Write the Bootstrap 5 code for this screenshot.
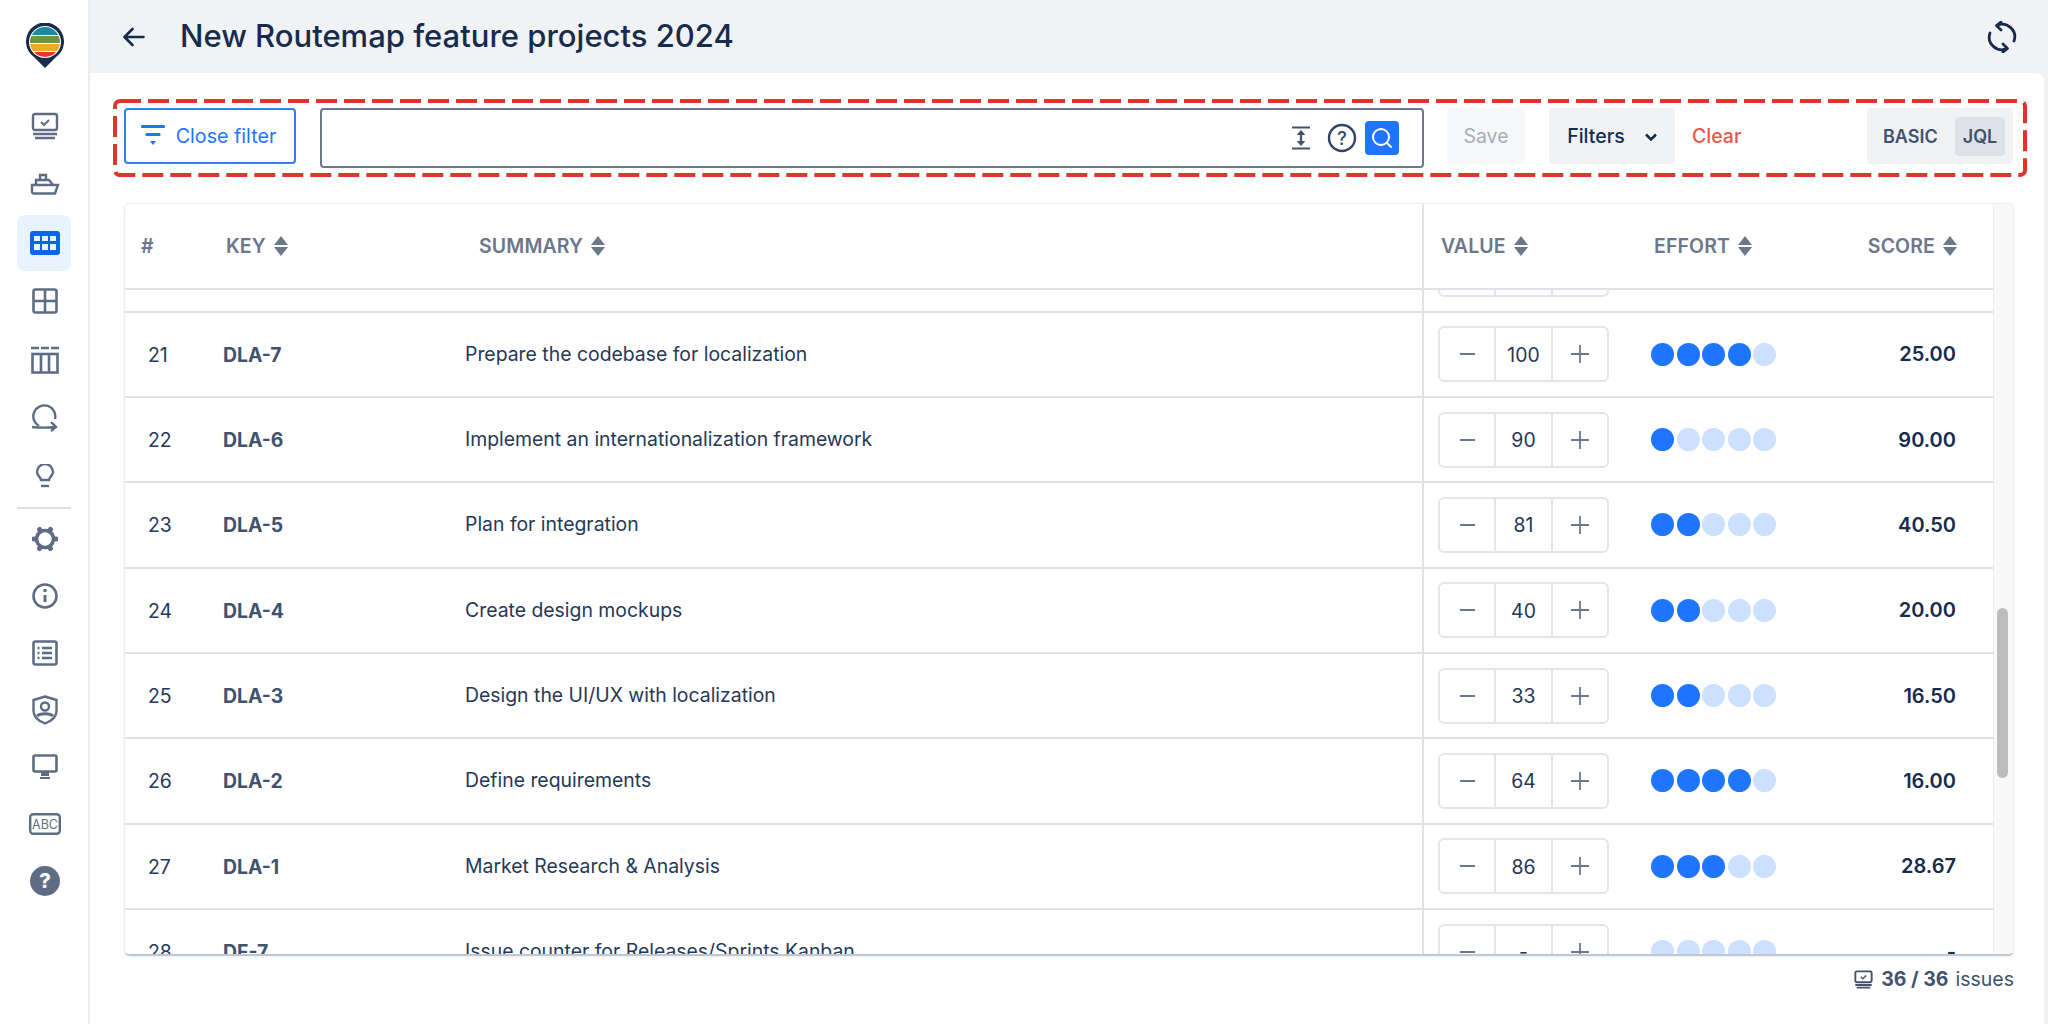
<!doctype html>
<html lang="en"><head><meta charset="utf-8"><title>Routemap</title>
<link href="https://cdn.jsdelivr.net/npm/bootstrap@5.3.0/dist/css/bootstrap.min.css" rel="stylesheet">
<style>
html,body{height:100%;overflow:hidden}
body{font-family:Inter,"Liberation Sans",sans-serif;color:#172b4d;background:#f1f2f4;font-size:19.500px}
.shell{height:1024px}
.rail{width:90px;background:#fff;border-right:2px solid #ebecf0;padding-top:23px}
.rail-logo{height:44px;margin-bottom:31px;padding-left:2px}
.rail-item{width:54px;height:56px;margin-bottom:2.4px;border-radius:8px;color:#5e6c84;padding-left:2px}
.rail-item.is-on{background:#e9f2ff;color:#0c66e4}
.rail-low .rail-item{height:57px;margin-bottom:0}
.rail-sep{width:54px;height:2px;background:#dfe1e6;margin:0 0 2px}
.topbar{height:73px;padding:0 30px 0 33px}
.topbar h1{font-size:31px;font-weight:500;margin:-2px 0 0 35px;color:#172b4d}
.sheet{background:#fff;margin-right:4px;border-top-right-radius:8px;height:951px;padding:26px 30px 0 34px}
.filterbar{position:relative;height:78px;margin:0 -13px 26px -11px;padding:9px 0 0 11px;align-items:flex-start}
.dashbox{position:absolute;left:0;top:0;pointer-events:none}
.btn-close-filter{height:56px;width:172px;border:2px solid #2f80ed;border-radius:4px;color:#1f75ff;background:#fff;font-size:19.700px;padding:2px 0 0;margin-right:24px;gap:11px}
.btn-close-filter svg{margin:-3px 0 0 -3px}
.jql{width:1104px;height:60px;border:2px solid #6b778c;border-radius:4px;padding-right:23px;margin-right:23px;background:#fff}
.go{width:34px;height:34px;border-radius:4px;background:#1f75ff}
.plain{height:56px;border-radius:4px;border:0;font-size:19.500px;padding:2px 0 0;background:#f1f2f4;font-weight:500}
.savebtn{width:78px;background:#f7f8f9;color:#a5adba;margin-right:24px;font-weight:400}
.filtersbtn{width:126px;margin-right:17px;color:#172b4d;gap:20px}
.clearlink{color:#e8574b;font-weight:500;line-height:56px;width:49px;white-space:nowrap}
.modes{width:146px;height:56px;background:#f1f2f4;border-radius:4px;margin-left:126px;padding:9px 8px 8px 16px;font-size:18px;font-weight:600;color:#42526e}
.modes b{font-weight:600;width:50px;height:39px;background:#dfe1e6;border-radius:4px;color:#42526e}
.grid-frame{height:753px;border:1px solid #ebecf0;border-bottom:2px solid #c1c7d0;border-radius:6px;box-shadow:0 1px 2px rgba(9,30,66,.08);overflow:hidden;width:1890px}
.scroller{height:100%;overflow:hidden;width:1868px;flex:none}
.track{flex:1 1 auto;background:#f9f9fa;border-left:1px solid #ebecf0;padding:404px 0 0 3px}
.thumb{width:11px;height:170px;border-radius:6px;background:#bdbdbd}
.issues{table-layout:fixed;width:1868px;border-collapse:separate;border-spacing:0;margin:0}
.issues th{position:sticky;top:0;z-index:2;background:#fff;height:86px;border-bottom:2px solid #dfe1e6;font-size:19.500px;letter-spacing:.12px;font-weight:600;color:#6b778c;padding:2px 0 0;vertical-align:middle;text-transform:uppercase;white-space:nowrap}
.issues td{height:85.33px;border-bottom:2px solid #dfe1e6;padding:0;vertical-align:middle;font-size:19.400px;color:#253858;background:#fff;white-space:nowrap}
.issues .divide{border-left:2px solid #dfe1e6}
.issues td.cnum{padding:2px 0 0 23px}
.issues th.cnum{padding-left:16px}
.issues td.ckey{padding:2px 0 0 10px;font-weight:700;color:#42526e}
.issues th.hkey{padding-left:13px}
.issues th.hsum{padding-left:14px}
.issues th.divide{padding-left:17px}
.issues td.cval{padding-left:14px}
.issues th.heff{padding-left:5px}
.issues th.hscore{text-align:right;padding-right:36px}
.issues td.cscore{text-align:right;padding-right:37px;font-weight:600;color:#172b4d;font-size:20px}
.spacer td{border:0;padding:0}
.sorter{display:inline-block;vertical-align:-3px;margin-left:8px}
.stepper{width:171px;height:56px;border:2px solid #e3e5e9;border-radius:6px;overflow:hidden;background:#fff}
.stepper span{display:flex;align-items:center;justify-content:center;height:100%}
.stepper .pm{width:54px;flex:none}
.stepper .mid{width:59px;padding-top:2px;border-left:2px solid #e3e5e9;border-right:2px solid #e3e5e9;flex:none;color:#253858}
.dots{gap:2.6px;padding-left:2px}
.dots i{display:block;width:23px;height:23px;border-radius:50%;background:#cce0ff}
.dots i.on{background:#1f75ff}
.tally{margin-top:9px;font-size:19.500px;color:#42526e;justify-content:flex-end;width:1890px}
.tally strong{font-weight:700;margin:0 7px 0 8px}
</style></head>
<body>
<div class="d-flex shell">
<nav class="rail d-flex flex-column align-items-center flex-shrink-0">
<div class="rail-logo">
<svg width="38" height="45" viewBox="0 0 38 45"><path d="M19 45 L8 34 A19 19 0 1 1 30 34 Z" fill="#172b4d"/><circle cx="19" cy="19" r="16" fill="#fff"/><clipPath id="lg"><circle cx="19" cy="19" r="15"/></clipPath><g clip-path="url(#lg)"><rect width="38" height="8" y="4" fill="#1b8a9c"/><rect width="38" height="7" y="13" fill="#76903f"/><rect width="38" height="7" y="21" fill="#f5a623"/><rect width="38" height="7" y="29" fill="#e8352e"/></g></svg>
</div>
<a class="rail-item d-flex align-items-center justify-content-center"><svg width="28" height="28" viewBox="0 0 28 28" fill="none" stroke="currentColor" stroke-width="2.4"><rect x="2" y="2" width="24" height="16" rx="2"/><path d="M10 10l3 3 5-5" stroke-width="2"/><path d="M2 22h24M4 26h20"/></svg></a>
<a class="rail-item d-flex align-items-center justify-content-center"><svg width="30" height="22" viewBox="0 0 30 22" fill="none" stroke="currentColor" stroke-width="2.4"><path d="M2 12h26l-3 8.500H4a2 2 0 0 1-2-2z"/><path d="M6 12V7h13l4 5M10 7V2h6v5"/></svg></a>
<a class="rail-item is-on d-flex align-items-center justify-content-center"><svg width="30" height="24" viewBox="0 0 30 24"><rect width="30" height="24" rx="3" fill="currentColor"/><g fill="#e9f2ff"><rect x="4" y="5" width="6" height="5"/><rect x="12" y="5" width="6" height="5"/><rect x="20" y="5" width="6" height="5"/><rect x="4" y="13" width="6" height="6"/><rect x="12" y="13" width="6" height="6"/><rect x="20" y="13" width="6" height="6"/></g></svg></a>
<a class="rail-item d-flex align-items-center justify-content-center"><svg width="26" height="26" viewBox="0 0 26 26" fill="none" stroke="currentColor" stroke-width="2.6"><rect x="1.500" y="1.500" width="23" height="23" rx="2"/><path d="M13 2v22M2 13h22"/></svg></a>
<a class="rail-item d-flex align-items-center justify-content-center"><svg width="28" height="28" viewBox="0 0 28 28" fill="none" stroke="currentColor" stroke-width="2.6"><path d="M0 2h8M10 2h8M20 2h8" /><rect x="1.500" y="8" width="25" height="18.500"/><path d="M10 8v18M18 8v18"/></svg></a>
<a class="rail-item d-flex align-items-center justify-content-center"><svg width="28" height="28" viewBox="0 0 28 28" fill="none" stroke="currentColor" stroke-width="2.4"><path d="M8 22A11 11 0 1 1 24 15"/><path d="M1 23c8 1 14 1 24 0M20 18l5 5-5 4"/></svg></a>
<a class="rail-item d-flex align-items-center justify-content-center"><svg width="20" height="24" viewBox="0 0 20 24" fill="none" stroke="currentColor" stroke-width="2.4"><path d="M6 16c0-3-4-4-4-8a8 8 0 0 1 16 0c0 4-4 5-4 8z"/><path d="M6 22h8"/></svg></a>
<div class="rail-sep"></div>
<div class="rail-low d-flex flex-column align-items-center">
<a class="rail-item d-flex align-items-center justify-content-center"><svg width="26" height="26" viewBox="0 0 26 26"><g transform="rotate(30 13 13)"><path d="M13 4.500a8.500 8.500 0 1 0 0 17 8.500 8.500 0 0 0 0-17z" fill="none" stroke="currentColor" stroke-width="3.600"/><g stroke="currentColor" stroke-width="5" stroke-linecap="round"><path d="M13 2v.5M13 23.500v.5M3.500 7.500l.4.2M22.100 18.300l.4.2M3.500 18.500l.4-.2M22.100 7.700l.4-.2"/></g></g></svg></a>
<a class="rail-item d-flex align-items-center justify-content-center"><svg width="26" height="26" viewBox="0 0 26 26" fill="none" stroke="currentColor" stroke-width="2.6"><circle cx="13" cy="13" r="11.500"/><path d="M13 12v7" stroke-width="3"/><circle cx="13" cy="7.500" r="1.800" fill="currentColor" stroke="none"/></svg></a>
<a class="rail-item d-flex align-items-center justify-content-center"><svg width="26" height="26" viewBox="0 0 26 26" fill="none" stroke="currentColor" stroke-width="2.6"><rect x="1.500" y="1.500" width="23" height="23" rx="2"/><path d="M10 8h10M10 13h10M10 18h10M5.500 8h2M5.500 13h2M5.500 18h2"/></svg></a>
<a class="rail-item d-flex align-items-center justify-content-center"><svg width="26" height="30" viewBox="0 0 26 30" fill="none" stroke="currentColor" stroke-width="2.4"><path d="M13 1.500L24.500 5v11c0 6-5 10-11.500 12.500C6.500 26 1.500 22 1.500 16V5z"/><circle cx="13" cy="11.500" r="4"/><path d="M5 21c3-3 13-3 16 0" stroke-width="3"/></svg></a>
<a class="rail-item d-flex align-items-center justify-content-center"><svg width="26" height="26" viewBox="0 0 26 26" fill="none" stroke="currentColor" stroke-width="2.6"><rect x="1.500" y="1.500" width="23" height="16" rx="1.500"/><path d="M10 18v3h6v-3zM8 24h10" fill="currentColor" stroke-width="2"/></svg></a>
<a class="rail-item d-flex align-items-center justify-content-center"><svg width="32" height="22" viewBox="0 0 32 22"><rect x="1.200" y="1.200" width="29.600" height="19.600" rx="3" fill="none" stroke="currentColor" stroke-width="2.400"/><text x="16" y="15.800" text-anchor="middle" font-size="12.500" font-family="Inter,sans-serif" fill="currentColor">ABC</text></svg></a>
<a class="rail-item d-flex align-items-center justify-content-center"><svg width="30" height="30" viewBox="0 0 30 30"><circle cx="15" cy="15" r="15" fill="currentColor"/><text x="15" y="22" text-anchor="middle" font-size="20" font-weight="800" font-family="Inter,sans-serif" fill="#fff">?</text></svg></a>
</div>
</nav>
<main class="flex-grow-1 d-flex flex-column" style="min-width:0">
<header class="topbar d-flex align-items-center">
<svg width="22" height="20" viewBox="0 0 22 20" fill="none" stroke="#172b4d" stroke-width="2.600" stroke-linecap="round" stroke-linejoin="round"><path d="M20.500 10H2M9.500 2L1.500 10l8 8"/></svg>
<h1>New Routemap feature projects 2024</h1>
<svg class="ms-auto" width="32" height="32" viewBox="0 0 32 32" fill="none" stroke="#172b4d" stroke-width="2.800" stroke-linecap="round" stroke-linejoin="round"><path d="M11 4.500A12.500 12.500 0 0 1 28 20M15 1L10.500 4.500L15 9M21 27.500A12.500 12.500 0 0 1 4 12M17 31L21.500 27.500L17 23"/></svg>
</header>
<section class="sheet">
<div class="filterbar d-flex">
<svg class="dashbox" width="1914" height="78" viewBox="0 0 1914 78" fill="none" stroke="#e03528" stroke-width="4" stroke-dasharray="21 7"><rect x="2" y="2" width="1910" height="74" rx="5"/></svg>
<button class="btn btn-close-filter d-flex align-items-center justify-content-center"><svg width="24" height="22" viewBox="0 0 24 22" fill="#1f75ff"><rect width="24" height="3" rx="1"/><rect x="4.500" y="8" width="15" height="3" rx="1"/><path d="M9 16h6l-3 4z"/></svg>Close filter</button>
<div class="jql d-flex align-items-center justify-content-end">
<svg width="20" height="24" viewBox="0 0 20 24" fill="none" stroke="#42526e" stroke-width="2.200" class="me-3"><path d="M1 1.500h18M1 22.500h18M10 7v10"/><path d="M6.500 8.500L10 4.500l3.500 4zM6.500 15.500L10 19.500l3.500-4z" fill="#42526e" stroke-width="1"/></svg>
<svg width="30" height="30" viewBox="0 0 30 30" class="me-2"><circle cx="15" cy="15" r="13" fill="none" stroke="#344563" stroke-width="2.400"/><text x="15" y="21.500" text-anchor="middle" font-size="18" font-weight="500" font-family="Inter,sans-serif" fill="#344563">?</text></svg>
<span class="go d-flex align-items-center justify-content-center"><svg width="24" height="24" viewBox="0 0 24 24" fill="none" stroke="#fff" stroke-width="2" stroke-linecap="round"><circle cx="11" cy="11" r="8"/><path d="M17 17l4 4"/></svg></span>
</div>
<button class="plain savebtn">Save</button>
<button class="plain filtersbtn d-flex align-items-center justify-content-center">Filters<svg width="12" height="9" viewBox="0 0 12 9" fill="none" stroke="#172b4d" stroke-width="2.600"><path d="M1 1.500l5 5 5-5"/></svg></button>
<span class="clearlink">Clear</span>
<div class="modes d-flex align-items-center justify-content-between">BASIC<b class="d-flex align-items-center justify-content-center">JQL</b></div>
</div>
<div class="grid-frame d-flex"><div class="scroller" id="sc">
<table class="issues" id="t"><colgroup><col style="width:88px"><col style="width:252px"><col style="width:957px"><col style="width:227px"><col style="width:203px"><col style="width:141px"></colgroup>
<thead><tr>
<th class="cnum">#</th>
<th class="hkey">Key<svg class="sorter" width="14" height="20" viewBox="0 0 14 20" fill="#6b778c"><path d="M7 0l7 9H0zM0 11h14l-7 9z"/></svg></th>
<th class="hsum">Summary<svg class="sorter" width="14" height="20" viewBox="0 0 14 20" fill="#6b778c"><path d="M7 0l7 9H0zM0 11h14l-7 9z"/></svg></th>
<th class="divide">Value<svg class="sorter" width="14" height="20" viewBox="0 0 14 20" fill="#6b778c"><path d="M7 0l7 9H0zM0 11h14l-7 9z"/></svg></th>
<th class="heff">Effort<svg class="sorter" width="14" height="20" viewBox="0 0 14 20" fill="#6b778c"><path d="M7 0l7 9H0zM0 11h14l-7 9z"/></svg></th>
<th class="hscore">Score<svg class="sorter" width="14" height="20" viewBox="0 0 14 20" fill="#6b778c"><path d="M7 0l7 9H0zM0 11h14l-7 9z"/></svg></th>
</tr></thead>
<tbody id="b"></tbody></table>
</div><div class="track"><div class="thumb"></div></div></div>
<div class="tally d-flex align-items-center"><svg width="19" height="19" viewBox="0 0 28 28" fill="none" stroke="#42526e" stroke-width="2.800"><rect x="2" y="2" width="24" height="16" rx="2"/><path d="M10 10l3 3 5-5" stroke-width="2"/><path d="M2 22h24M4 26h20"/></svg><strong>36 / 36</strong>issues</div>
</section>
</main>
</div>
<script src="https://cdn.jsdelivr.net/npm/bootstrap@5.3.0/dist/js/bootstrap.bundle.min.js"></script>
<script>
var rows=[[20,"","",0,0,""],[21,"DLA-7","Prepare the codebase for localization","100",4,"25.00"],[22,"DLA-6","Implement an internationalization framework","90",1,"90.00"],[23,"DLA-5","Plan for integration","81",2,"40.50"],[24,"DLA-4","Create design mockups","40",2,"20.00"],[25,"DLA-3","Design the UI/UX with localization","33",2,"16.50"],[26,"DLA-2","Define requirements","64",4,"16.00"],[27,"DLA-1","Market Research &amp; Analysis","86",3,"28.67"],[28,"DF-7","Issue counter for Releases/Sprints Kanban","-",0,"-"]];
var minus='<svg width="15" height="2" viewBox="0 0 15 2"><rect width="15" height="2" fill="#6b778c"/></svg>';
var plus='<svg width="18" height="18" viewBox="0 0 18 18" fill="none" stroke="#6b778c" stroke-width="1.800"><path d="M0 9h18M9 0v18"/></svg>';
var h='<tr class="spacer"><td colspan="6" style="height:'+(19*85.33)+'px"></td></tr>';
rows.forEach(function(r){var d='';for(var i=0;i<5;i++)d+='<i class="'+(i<r[4]?'on':'')+'"></i>';
h+='<tr><td class="cnum">'+r[0]+'</td><td class="ckey">'+r[1]+'</td><td class="csum">'+r[2]+'</td><td class="divide cval"><div class="stepper d-flex"><span class="pm">'+minus+'</span><span class="mid">'+r[3]+'</span><span class="pm">'+plus+'</span></div></td><td><div class="dots d-flex">'+d+'</div></td><td class="cscore">'+r[5]+'</td></tr>';});
h+='<tr class="spacer"><td colspan="6" style="height:'+(8*85.33)+'px"></td></tr>';
document.getElementById('b').innerHTML=h;
var s=document.getElementById('sc');
var t=document.getElementById('b').rows[2];
s.scrollTop=t.offsetTop-109;
</script>
</body></html>
